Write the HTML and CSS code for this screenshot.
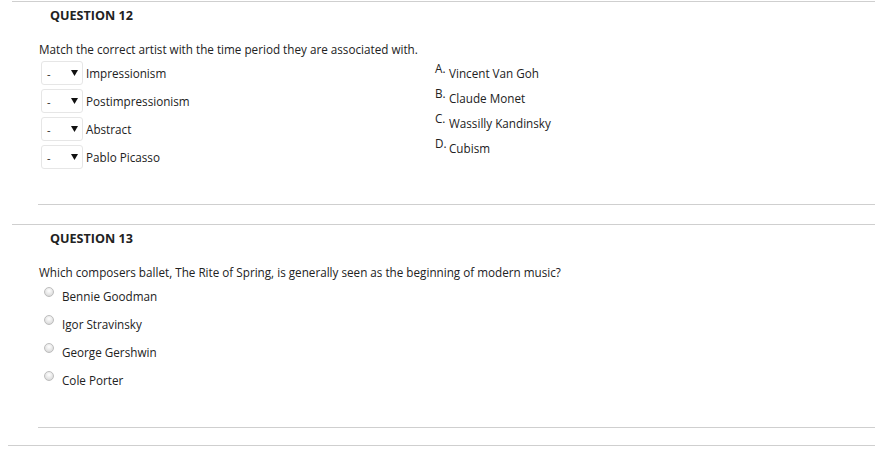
FILE: index.html
```html
<!DOCTYPE html>
<html>
<head>
<meta charset="utf-8">
<link rel="stylesheet" href="styles.css">
</head>
<body>
<div class="question q-first">
  <h3 class="q-title">QUESTION 12</h3>
  <div class="q-body">
    <p class="q-text">Match the correct artist with the time period they are associated with.</p>
    <div class="match">
      <div class="match-left">
        <div class="m-row"><span class="sel"><span class="dash">-</span><svg class="arrow" width="7" height="6" viewBox="0 0 7 6"><path d="M0 0H7L3.5 6Z" fill="#111"/></svg></span><span class="m-label">Impressionism</span></div>
        <div class="m-row"><span class="sel"><span class="dash">-</span><svg class="arrow" width="7" height="6" viewBox="0 0 7 6"><path d="M0 0H7L3.5 6Z" fill="#111"/></svg></span><span class="m-label">Postimpressionism</span></div>
        <div class="m-row"><span class="sel"><span class="dash">-</span><svg class="arrow" width="7" height="6" viewBox="0 0 7 6"><path d="M0 0H7L3.5 6Z" fill="#111"/></svg></span><span class="m-label">Abstract</span></div>
        <div class="m-row"><span class="sel"><span class="dash">-</span><svg class="arrow" width="7" height="6" viewBox="0 0 7 6"><path d="M0 0H7L3.5 6Z" fill="#111"/></svg></span><span class="m-label">Pablo Picasso</span></div>
      </div>
      <div class="match-right">
        <div class="a-row"><span class="letter">A.</span><span class="a-text">Vincent Van Goh</span></div>
        <div class="a-row"><span class="letter">B.</span><span class="a-text">Claude Monet</span></div>
        <div class="a-row"><span class="letter">C.</span><span class="a-text">Wassilly Kandinsky</span></div>
        <div class="a-row"><span class="letter">D.</span><span class="a-text">Cubism</span></div>
      </div>
    </div>
  </div>
  <div class="sep sep-12"></div>
</div>
<div class="question">
  <h3 class="q-title">QUESTION 13</h3>
  <div class="q-body">
    <p class="q-text">Which composers ballet, The Rite of Spring, is generally seen as the beginning of modern music?</p>
    <div class="options">
      <label class="opt"><span class="radio"></span><span class="o-text">Bennie Goodman</span></label>
      <label class="opt"><span class="radio"></span><span class="o-text">Igor Stravinsky</span></label>
      <label class="opt"><span class="radio"></span><span class="o-text">George Gershwin</span></label>
      <label class="opt"><span class="radio"></span><span class="o-text">Cole Porter</span></label>
    </div>
  </div>
  <div class="sep sep-13"></div>
</div>
<div class="question q-last"></div>
</body>
</html>
```
FILE: styles.css
```css
html, body {
  margin: 0;
  padding: 0;
  background: #fff;
}
body {
  font-family: "Open Sans", "Liberation Sans", sans-serif;
  font-size: 11.7px;
  color: #222;
}
.question {
  margin-left: 12px;
  border-top: 1px solid #cfcfcf;
}
.q-first {
  margin-top: 1px;
}
.q-last {
  margin-left: 8px;
}
.q-title {
  margin: 0;
  padding: 5px 0 0 38px;
  font-size: 12.6px;
  font-weight: 700;
  line-height: 18px;
  color: #222;
}
.q-body {
  padding-left: 27px;
}
.q-text {
  margin: 16px 0 0 0;
  line-height: 17px;
}
.match {
  display: grid;
  grid-template-columns: 396px auto;
  margin-top: 3px;
}
.match-left {
  display: flex;
  flex-direction: column;
  gap: 4px;
  padding-left: 2px;
}
.m-row {
  display: flex;
  align-items: center;
  height: 24px;
}
.sel {
  display: flex;
  align-items: center;
  box-sizing: border-box;
  width: 42px;
  height: 24px;
  border: 1px solid #e6e6e6;
  border-radius: 3px;
  padding-left: 5px;
  font-size: 11px;
  color: #222;
}
.dash {
  width: 24px;
}
.arrow {
  display: block;
}
.m-label {
  margin-left: 3px;
}
.match-right {
  display: flex;
  flex-direction: column;
  margin-top: 0;
}
.a-row {
  display: flex;
  align-items: flex-start;
  height: 25px;
}
.letter {
  width: 14px;
  line-height: 14px;
}
.a-text {
  margin-top: 4px;
  line-height: 17px;
}
.options {
  display: flex;
  flex-direction: column;
  margin-top: 7px;
  gap: 11px;
}
.opt {
  display: flex;
  align-items: flex-start;
  height: 17px;
  line-height: 17px;
}
.radio {
  box-sizing: border-box;
  width: 10px;
  height: 10px;
  margin: -1px 8px 0 5px;
  border-radius: 50%;
  border: 1px solid #bdbdbd;
  background: radial-gradient(circle at 50% 35%, #ffffff 0%, #e6e6e6 55%, #cfcfcf 100%);
}
.sep {
  margin-left: 26px;
  border-top: 1px solid #cfcfcf;
}
.sep-12 {
  margin-top: 35px;
  margin-bottom: 19px;
}
.sep-13 {
  margin-top: 38px;
  margin-bottom: 17px;
}
```
